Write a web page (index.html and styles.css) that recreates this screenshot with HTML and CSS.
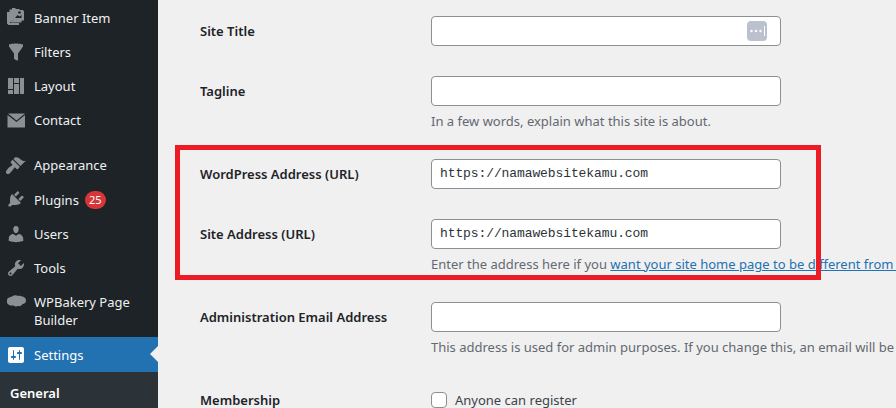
FILE: index.html
```html
<!DOCTYPE html>
<html lang="en">
<head>
<meta charset="utf-8">
<title>General Settings</title>
<link rel="stylesheet" href="styles.css">
</head>
<body>
<div class="page">
  <nav class="sidebar">
    <ul class="menu menu-top">
      <li class="item"><svg class="icon" viewBox="0 0 20 20"><path d="M1 4h3v11h9v2H2.500L1 15.500zM3.500 1.500h3v11h9v2H5L3.500 13zM6 0h3l1 1h3l1 1h3l1 1.500v9H7.500L6 11.500z"/><circle cx="13.500" cy="4.500" r="1.300" fill="#1d2327"/><path d="M9 10l2.500-3 2 1.500 2-1.500v3z" fill="#1d2327"/></svg><span>Banner Item</span></li>
      <li class="item"><svg class="icon" viewBox="0 0 20 20"><path d="M3 4.500v-2s3.340-1 7-1 7 1 7 1v2l-5 7.030v6.970s-1.220-.09-2.250-.59S8 16.500 8 16.500v-4.970z"/></svg><span>Filters</span></li>
      <li class="item"><svg class="icon" viewBox="0 0 20 20"><path d="M2 2h5v11H2V2zm6 0h5v5H8V2zm6 0h4v16h-4V2zM2 14h5v4H2v-4zm6-6h5v10H8V8z"/></svg><span>Layout</span></li>
      <li class="item"><svg class="icon" viewBox="0 0 20 20"><path d="M2 3.500h17L10.500 10.500zM1.500 5l9 7 8.500-7v12.500H1.500z"/></svg><span>Contact</span></li>
    </ul>
    <ul class="menu menu-main">
      <li class="item"><svg class="icon" viewBox="0 0 20 20"><path d="M14.480 11.060L7.410 3.990l1.500-1.500c.5-.56 2.300-.47 3.510.32 1.210.8 1.430 1.280 2.910 2.100 1.180.64 2.450 1.260 4.450.85zm-.71.71L6.700 4.700 4.930 6.470c-.39.39-.39 1.020 0 1.410l1.060 1.060c.39.39.39 1.030 0 1.420-.6.6-3.300 2.400-3.800 3L.5 15.500c-.8.9-.8 2.200 0 3 .9.800 2.100.8 3 0l1.700-1.800c.6-.6 2.400-3.200 3-3.800.39-.39 1.030-.39 1.420 0l1.060 1.060c.39.39 1.020.39 1.410 0z"/></svg><span>Appearance</span></li>
      <li class="item item-plugins"><svg class="icon" viewBox="0 0 20 20"><path d="M13.110 4.360L9.870 7.600 8 5.730l3.240-3.240c.35-.34 1.050-.2 1.560.32.520.51.660 1.210.310 1.550zm-8 1.770l.910-1.120 9.010 9.010-1.190.840c-.71.710-2.630 1.160-3.820 1.160H6.140L4.900 17.260c-.59.590-1.540.590-2.120 0-.59-.58-.59-1.530 0-2.120l1.240-1.240v-3.880c0-1.130.4-3.190 1.090-3.890zm7.260 3.970l3.240-3.240c.34-.35 1.040-.21 1.550.31.520.51.660 1.210.310 1.550l-3.240 3.250z"/></svg><span>Plugins</span><b class="badge">25</b></li>
      <li class="item"><svg class="icon" viewBox="0 0 20 20"><path d="M10 9.250c-2.270 0-2.730-3.440-2.730-3.440C7 4.020 7.820 2 9.970 2c2.160 0 2.980 2.020 2.710 3.810 0 0-.41 3.440-2.680 3.440zm0 2.570L12.720 10c2.390 0 4.520 2.330 4.520 4.530v2.490s-3.650 1.130-7.240 1.130c-3.650 0-7.240-1.130-7.240-1.130v-2.490c0-2.250 1.940-4.530 4.470-4.530z"/></svg><span>Users</span></li>
      <li class="item"><svg class="icon" viewBox="0 0 20 20"><path d="M16.680 9.770c-1.340 1.340-3.300 1.670-4.950.99l-5.410 6.520c-.99.99-2.590.99-3.580 0s-.99-2.590 0-3.570l6.520-5.420c-.68-1.650-.35-3.610.99-4.950 1.280-1.280 3.120-1.620 4.720-1.060l-2.890 2.890 2.820 2.820 2.860-2.870c.53 1.580.18 3.390-1.080 4.670zM3.810 16.210c.4.39 1.040.39 1.430 0 .4-.4.4-1.040 0-1.430-.39-.4-1.030-.4-1.430 0-.39.39-.39 1.030 0 1.430z"/></svg><span>Tools</span></li>
      <li class="item item-tall"><svg class="icon" viewBox="0 0 20 20"><path d="M5 2.500c2-1.500 4.500-1.500 6-.5 1.500-.5 3-.3 4 .5 2 .2 4 1.500 4 4 0 2-1.500 3.500-3.500 3.500-.5 1.500-2.500 2.500-4.500 2-1.500.800-3.500.6-4.500-.5C3 12 .5 10.500-.500 8-1 5 2 3 5 2.500z"/></svg><span>WPBakery Page Builder</span></li>
      <li class="item item-current"><svg class="icon" viewBox="0 0 20 20"><path d="M18 16V4c0-1.100-.9-2-2-2H4c-1.100 0-2 .9-2 2v12c0 1.100.9 2 2 2h12c1.100 0 2-.9 2-2zM8 11h1c.55 0 1 .45 1 1s-.45 1-1 1H8v1.500c0 .28-.22.5-.5.5s-.5-.22-.5-.5V13H6c-.55 0-1-.45-1-1s.45-1 1-1h1V5.500c0-.28.22-.5.5-.5s.5.22.5.5V11zm5-2h-1c-.55 0-1-.45-1-1s.45-1 1-1h1V5.500c0-.28.22-.5.5-.5s.5.22.5.5V7h1c.55 0 1 .45 1 1s-.45 1-1 1h-1v5.500c0 .28-.22.5-.5.5s-.5-.22-.5-.5V9z"/></svg><span>Settings</span></li>
    </ul>
    <div class="submenu"><span class="submenu-current">General</span></div>
  </nav>
  <main class="content">
    <div class="form">
      <div class="row">
        <label class="label">Site Title</label>
        <div class="field">
          <div class="input-wrap">
            <div class="input"></div>
            <span class="fill-btn"><svg viewBox="0 0 20 20"><circle cx="4.500" cy="10" r="1.200"/><circle cx="9" cy="10" r="1.200"/><circle cx="13.500" cy="10" r="1.200"/><rect x="17" y="5" width="1" height="10"/></svg></span>
          </div>
        </div>
      </div>
      <div class="row">
        <label class="label">Tagline</label>
        <div class="field">
          <div class="input"></div>
          <p class="desc">In a few words, explain what this site is about.</p>
        </div>
      </div>
      <div class="row">
        <label class="label">WordPress Address (URL)</label>
        <div class="field"><div class="input mono">https://namawebsitekamu.com</div></div>
      </div>
      <div class="row">
        <label class="label">Site Address (URL)</label>
        <div class="field">
          <div class="input mono">https://namawebsitekamu.com</div>
          <p class="desc">Enter the address here if you <a class="link" href="#">want your site home page to be different from your WordPress installation directory</a>.</p>
        </div>
      </div>
      <div class="row">
        <label class="label">Administration Email Address</label>
        <div class="field">
          <div class="input"></div>
          <p class="desc">This address is used for admin purposes. If you change this, an email will be sent to your new address to confirm it.</p>
        </div>
      </div>
      <div class="row">
        <label class="label">Membership</label>
        <div class="field check-field"><span class="checkbox"></span><span>Anyone can register</span></div>
      </div>
    </div>
    <div class="highlight"></div>
  </main>
</div>
</body>
</html>
```

FILE: styles.css
```css
* { box-sizing: border-box; }
html, body { margin: 0; padding: 0; height: 100%; overflow: hidden; }
body {
  background: #f0f0f1;
  color: #1d2327;
  font-family: "Noto Sans", "Open Sans", sans-serif;
  font-size: 13px;
}
.page { display: flex; width: 896px; height: 408px; overflow: hidden; }

.sidebar { flex: 0 0 158px; background: #1d2327; color: #f0f0f1; padding-top: 1px; }
.menu { list-style: none; margin: 0; padding: 0; }
.menu-top { margin-bottom: 11px; }
.item {
  position: relative;
  display: flex;
  align-items: center;
  height: 34px;
  padding-left: 34px;
  font-size: 13px;
  line-height: 18px;
}
.icon { position: absolute; left: 6px; top: 7px; width: 20px; height: 20px; fill: #8c8f94; }
.item-plugins { height: 35px; }
.item-tall { height: 52px; padding-right: 12px; }
.item-tall .icon { top: 9px; left: 7px; }
.item-current { height: 35px; background: #2271b1; color: #fff; }
.item-current .icon { fill: #fff; top: 8px; }
.item-current::after {
  content: "";
  position: absolute;
  right: 0;
  top: 9px;
  border: 8px solid transparent;
  border-left-width: 0;
  border-right-color: #f0f0f1;
}
.badge {
  display: inline-block;
  min-width: 21px;
  height: 18px;
  margin-left: 6px;
  border-radius: 9px;
  background: #d63638;
  color: #fff;
  font-size: 11px;
  font-weight: 400;
  line-height: 18px;
  text-align: center;
}
.submenu { background: #2c3338; height: 36px; padding: 12px 0 0 10px; line-height: 18px; }
.submenu-current { color: #fff; font-weight: 600; font-size: 13px; }

.content { position: relative; flex: 1; min-width: 0; }
.form { padding: 16px 0 0 42px; display: flex; flex-direction: column; width: 1000px; }
.row { display: flex; padding-bottom: 30px; }
.label {
  flex: 0 0 231px;
  height: 30px;
  line-height: 30px;
  font-size: 13px;
  font-weight: 600;
}
.field { flex: 1; }
.input-wrap { position: relative; width: 350px; }
.input {
  width: 350px;
  height: 30px;
  padding: 0 8px;
  background: #fff;
  border: 1px solid #8c8f94;
  border-radius: 4px;
  line-height: 28px;
}
.mono { font-family: "Liberation Mono", "DejaVu Sans Mono", monospace; font-size: 13px; letter-spacing: -.1px; color: #2c3338; }
.fill-btn {
  position: absolute;
  right: 14px;
  top: 5px;
  width: 20px;
  height: 20px;
  border-radius: 4px;
  background: #bcc1ce;
}
.fill-btn svg { display: block; width: 20px; height: 20px; fill: #fff; }
.desc {
  margin: 6px 0 -1px;
  line-height: 18px;
  font-size: 13px;
  color: #646970;
  white-space: nowrap;
}
.link { color: #2271b1; text-decoration: underline; }
.check-field { display: flex; align-items: center; gap: 8px; height: 16px; margin-top: 7px; color: #3c434a; white-space: nowrap; }
.checkbox {
  width: 16px;
  height: 16px;
  background: #fff;
  border: 1px solid #8c8f94;
  border-radius: 4px;
}
.highlight {
  position: absolute;
  left: 17px;
  top: 145px;
  width: 646px;
  height: 135px;
  border: 5px solid #ed1c24;
  pointer-events: none;
}
```
